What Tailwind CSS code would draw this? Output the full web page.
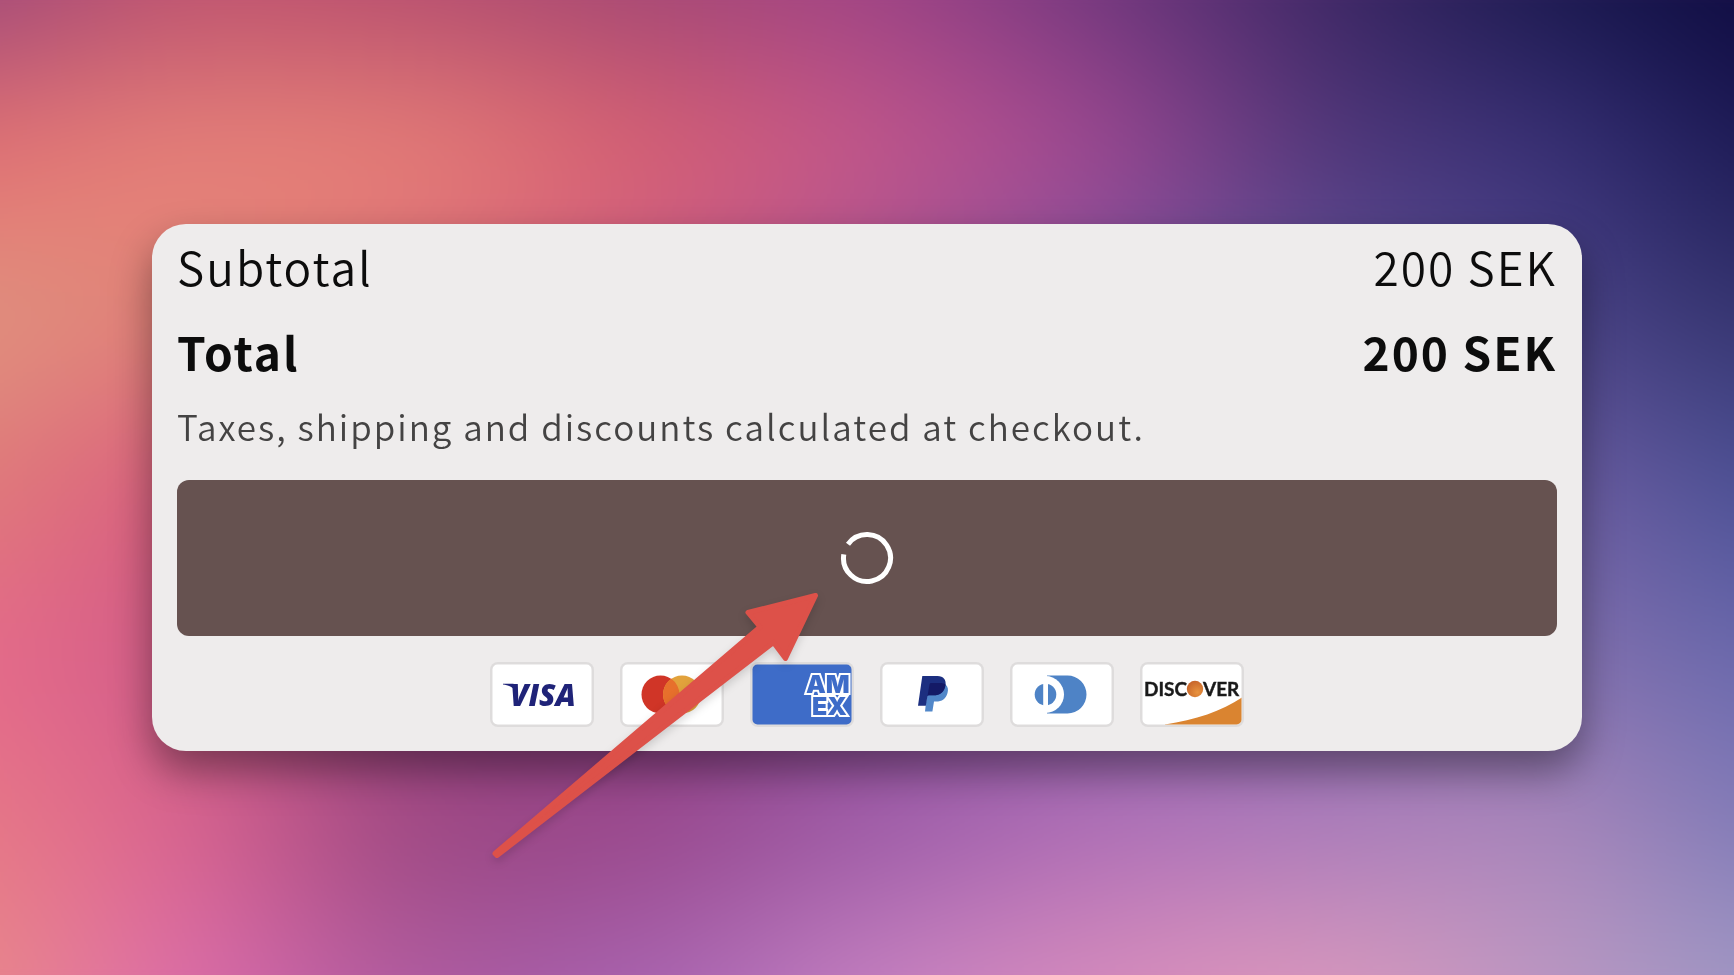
<!DOCTYPE html>
<html lang="en">
<head>
  <meta charset="UTF-8" />
  <meta name="viewport" content="width=device-width, initial-scale=1.0"/>
  <title>Cart Summary</title>
  <script src="https://cdn.jsdelivr.net/npm/@tailwindcss/browser@4"></script>
</head>
<body class="relative min-h-screen overflow-hidden bg-[#a04c90] font-['Noto_Sans_CJK_SC',sans-serif]">

  <!-- Background -->
  <canvas id="backdrop" width="480" height="270" class="absolute inset-0 h-full w-full scale-105 blur-md"></canvas>

  <main class="relative flex min-h-screen items-center px-[152px]">
    <section class="relative w-full rounded-[34px] bg-[#eeecec] px-[25px] pt-[10px] pb-6 tracking-[2px] shadow-[0_20px_40px_rgba(0,0,0,0.4)]">

      <!-- Totals -->
      <dl class="flex flex-col gap-[21px] text-[46px] leading-[64px] text-[#0c0c0c]">
        <div class="flex justify-between font-[350]">
          <dt>Subtotal</dt>
          <dd>200 SEK</dd>
        </div>
        <div class="flex justify-between font-bold">
          <dt>Total</dt>
          <dd>200 SEK</dd>
        </div>
      </dl>
      <p class="mt-[19px] text-[35px] leading-[48px] font-[350] text-[#444343]">Taxes, shipping and discounts calculated at checkout.</p>

      <!-- Checkout button (loading) -->
      <button type="button" aria-label="Check out" aria-busy="true" class="mt-[30px] flex h-[156px] w-full items-center justify-center rounded-xl bg-[#665250]">
        <svg class="h-14 w-14" viewBox="0 0 56 56" fill="none" stroke="#fff" stroke-width="5">
          <path d="M9 14.2A23.5 23.5 0 1 1 4.8 24.3" />
        </svg>
      </button>

      <!-- Payment methods -->
      <ul class="mt-[26px] flex justify-center gap-[26px]">
        <li>
          <svg class="h-[65px] w-[104px]" viewBox="0 0 104 65" role="img" aria-label="Visa">
            <rect width="104" height="65" rx="8" fill="#dedcdc" />
            <rect x="2.5" y="2.5" width="99" height="60" rx="5" fill="#fff" />
            <path d="M13 21.8h10.5l3 9C24 26 20 23.5 13 22.4z" fill="#1f2378" />
            <text x="20" y="43.5" font-family="Open Sans" font-size="30" font-weight="800" font-style="italic" letter-spacing="0" fill="#1f2378">VISA</text>
          </svg>
        </li>
        <li>
          <svg class="h-[65px] w-[104px]" viewBox="0 0 104 65" role="img" aria-label="Mastercard">
            <rect width="104" height="65" rx="8" fill="#dedcdc" />
            <rect x="2.5" y="2.5" width="99" height="60" rx="5" fill="#fff" />
            <circle cx="40.5" cy="32.5" r="19" fill="#d03527" />
            <circle cx="62" cy="32.5" r="19" fill="#e2a23c" />
            <path d="M51.25 16.83a19 19 0 0 1 0 31.34a19 19 0 0 1 0-31.34z" fill="#e7702c" />
          </svg>
        </li>
        <li>
          <svg class="h-[65px] w-[104px]" viewBox="0 0 104 65" role="img" aria-label="American Express">
            <clipPath id="amexClip"><rect x="2.5" y="2.5" width="99" height="60" rx="5" /></clipPath>
            <rect width="104" height="65" rx="8" fill="#dedcdc" />
            <rect x="2.5" y="2.5" width="99" height="60" rx="5" fill="#3e6cc8" />
            <g clip-path="url(#amexClip)" font-family="Inter" font-size="25" font-weight="900" letter-spacing="0" fill="#3e6cc8" stroke="#fff" stroke-width="4" paint-order="stroke">
              <text x="56" y="31">AM</text>
              <text x="62" y="53">EX</text>
            </g>
          </svg>
        </li>
        <li>
          <svg class="h-[65px] w-[104px]" viewBox="0 0 104 65" role="img" aria-label="PayPal">
            <rect width="104" height="65" rx="8" fill="#dedcdc" />
            <rect x="2.5" y="2.5" width="99" height="60" rx="5" fill="#fff" />
            <path d="M48 22.5h17.5c2.5 2 3 5 2 8.5c-1.5 6-5.5 8.5-11.5 8.5h-2l-1.6 10h-7.4z" fill="#5187c9" />
            <path d="M42.3 14h15.2c6 0 9 4 8 9.5c-1.3 7-5.5 9.8-12 9.8h-4.5c-1 0-1.5.5-1.7 1.5l-1.5 9H38z" fill="#1c2f80" />
            <path d="M49.5 22.5c.2-1 .8-1.5 1.7-1.5h9c2.2 0 4 .5 5.3 1.5c-1.2 7.7-5.5 10.8-12 10.8h-4.5c-.7 0-1.2.3-1.5.8z" fill="#141a66" />
          </svg>
        </li>
        <li>
          <svg class="h-[65px] w-[104px]" viewBox="0 0 104 65" role="img" aria-label="Diners Club">
            <rect width="104" height="65" rx="8" fill="#dedcdc" />
            <rect x="2.5" y="2.5" width="99" height="60" rx="5" fill="#fff" />
            <path d="M37 13.5h20.5a19 19 0 0 1 0 38H37z" fill="#4e83c6" />
            <circle cx="35.5" cy="32.5" r="18.5" fill="#fff" />
            <circle cx="35.5" cy="32.5" r="10.8" fill="#4e83c6" />
            <path d="M33.2 20h4.8v25h-4.8z" fill="#fff" />
          </svg>
        </li>
        <li>
          <svg class="h-[65px] w-[104px]" viewBox="0 0 104 65" role="img" aria-label="Discover">
            <defs>
              <radialGradient id="discoverDot" cx="0.65" cy="0.7" r="0.7">
                <stop offset="0" stop-color="#e8933f" />
                <stop offset="1" stop-color="#c9672b" />
              </radialGradient>
              <clipPath id="discoverClip"><rect x="2.5" y="2.5" width="99" height="60" rx="5" /></clipPath>
            </defs>
            <rect width="104" height="65" rx="8" fill="#dedcdc" />
            <rect x="2.5" y="2.5" width="99" height="60" rx="5" fill="#fff" />
            <path clip-path="url(#discoverClip)" d="M25 62.5C55 58 82 49 102 35.5V63H25z" fill="#da8430" />
            <g font-family="Lato" font-size="19" font-weight="700" letter-spacing="0" fill="#1a1a1a" stroke="#1a1a1a" stroke-width="0.4">
              <text x="4" y="34">DISC</text>
              <text x="63" y="34">VER</text>
            </g>
            <circle cx="55" cy="27" r="8.2" fill="url(#discoverDot)" />
          </svg>
        </li>
      </ul>

      <!-- Arrow pointing at the loading button -->
      <svg class="absolute -bottom-[119px] left-1/2 -ml-[387px] h-[290px] w-[360px] drop-shadow-lg" viewBox="0 0 360 290" aria-hidden="true">
        <path d="M15 273.5L280 47L268 32.5L335.5 15.5L305.5 78.5L293.5 62.5L17 275.5z" fill="#dd5149" stroke="#dd5149" stroke-width="5" stroke-linejoin="round" />
      </svg>
    </section>
  </main>

  <script>
    // Colour mesh, one row of stops per line, spread evenly over the page
    const mesh = [
      ["#a04a7a", "#be5470", "#b8506f", "#a64974", "#a04484", "#74387e", "#402866", "#1c1a50", "#0e0a40"],
      ["#de7074", "#e37e78", "#e27a76", "#d46074", "#c0568a", "#9a4890", "#54397c", "#383074", "#1c1a54"],
      ["#e0907e", "#e08078", "#d86c78", "#c85a84", "#a85090", "#80509c", "#605098", "#4c4488", "#34346f"],
      ["#e07c7a", "#d86080", "#b85084", "#a04488", "#944c98", "#8058a0", "#7058a0", "#6c5ca0", "#4a5094"],
      ["#e66c8a", "#d05c88", "#a04484", "#904088", "#9450a0", "#8c60ac", "#8a68b0", "#8470ae", "#6868ac"],
      ["#e77a86", "#d8648f", "#a04a84", "#9a4a8e", "#a05ea8", "#b070b6", "#ae7eba", "#a886ba", "#807cb8"],
      ["#ea8a88", "#dc6ea8", "#b05ca0", "#a864b0", "#c480c0", "#d68cbc", "#da98bc", "#bc98c2", "#9e98c4"]
    ];

    const small = document.createElement("canvas");
    small.width = mesh[0].length;
    small.height = mesh.length;
    const smallCtx = small.getContext("2d");
    mesh.forEach((row, y) => {
      row.forEach((color, x) => {
        smallCtx.fillStyle = color;
        smallCtx.fillRect(x, y, 1, 1);
      });
    });

    const backdrop = document.getElementById("backdrop");
    const ctx = backdrop.getContext("2d");
    ctx.imageSmoothingEnabled = true;
    ctx.imageSmoothingQuality = "high";
    ctx.drawImage(small, 0.5, 0.5, small.width - 1, small.height - 1, 0, 0, backdrop.width, backdrop.height);
  </script>
</body>
</html>
